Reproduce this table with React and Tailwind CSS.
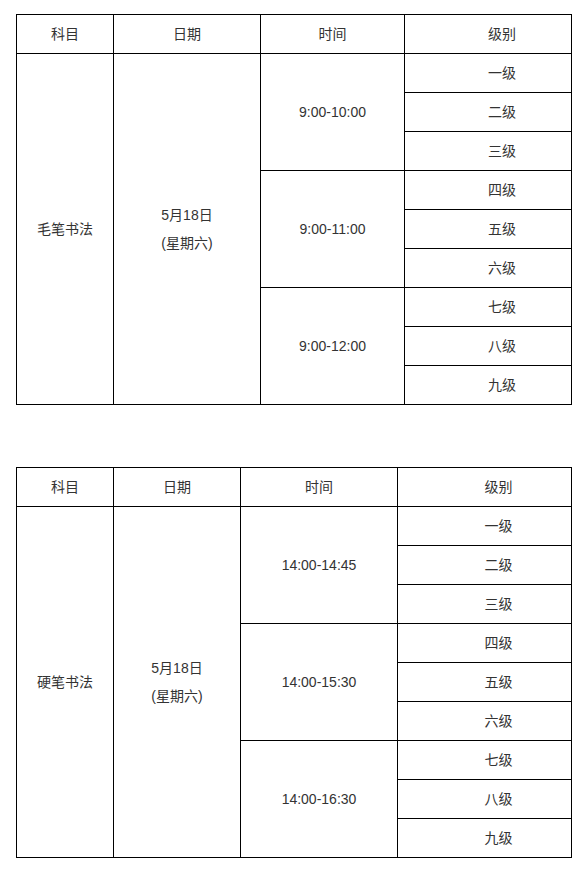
import React from 'react';

const levels = ['一级', '二级', '三级', '四级', '五级', '六级', '七级', '八级', '九级'];

const cell = 'border border-black text-center align-middle font-normal p-0';
// last column text sits right of centre in the original
const lvCell = 'border border-black text-center align-middle font-normal p-0 pl-[28px]';

const ExamTable = ({ subject, times, widths }) => (
  <table className="table-fixed border-collapse w-[555px] text-[14px] text-[#333]">
    <colgroup>
      {widths.map((w, i) => (
        <col key={i} style={{ width: w }} />
      ))}
    </colgroup>
    <thead>
      <tr className="h-[39px]">
        <th className={cell}>科目</th>
        <th className={cell}>日期</th>
        <th className={cell}>时间</th>
        <th className={lvCell}>级别</th>
      </tr>
    </thead>
    <tbody>
      {levels.map((lv, i) => (
        <tr key={lv} className="h-[39px]">
          {i === 0 && (
            <td rowSpan={9} className={cell}>
              {subject}
            </td>
          )}
          {i === 0 && (
            <td rowSpan={9} className={`${cell} leading-[28px]`}>
              5月18日
              <br />
              (星期六)
            </td>
          )}
          {i % 3 === 0 && (
            <td rowSpan={3} className={cell}>
              {times[i / 3]}
            </td>
          )}
          <td className={lvCell}>{lv}</td>
        </tr>
      ))}
    </tbody>
  </table>
);

export default function App() {
  return (
    <div
      className="bg-white w-[585px] min-h-[874px] pt-[14px] pl-[16px]"
      style={{ fontFamily: '"Liberation Sans", "Noto Sans CJK SC", sans-serif' }}
    >
      <ExamTable
        subject="毛笔书法"
        times={['9:00-10:00', '9:00-11:00', '9:00-12:00']}
        widths={[97, 147, 144, 167]}
      />
      <div className="h-[62px]" />
      <ExamTable
        subject="硬笔书法"
        times={['14:00-14:45', '14:00-15:30', '14:00-16:30']}
        widths={[97, 127, 157, 174]}
      />
    </div>
  );
}
